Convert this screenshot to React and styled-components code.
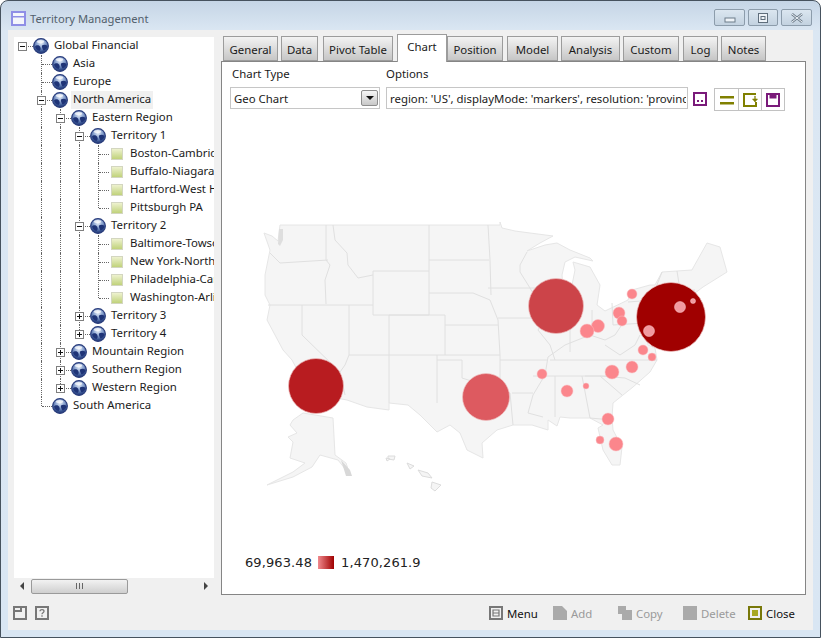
import React from 'react';
import styled, { createGlobalStyle } from 'styled-components';

const Global = createGlobalStyle`
  html, body { margin: 0; padding: 0; background: #fff; }
  #root { width: 821px; height: 638px; overflow: hidden; }
  * { box-sizing: border-box; }
`;

const Win = styled.div`
  width: 821px; height: 638px;
  display: flex; flex-direction: column;
  border: 1px solid #46525e;
  border-radius: 8px 8px 0 0;
  background: linear-gradient(180deg, #c5d5e6 0, #dbe7f3 30px, #d9e6f3 100%);
  padding: 0 7px 7px 7px;
  font-family: "Noto Sans", "Open Sans", sans-serif;
  font-size: 11.4px;
  color: #1a1a1a;
`;
const TitleBar = styled.div`
  height: 29px; flex: none;
  display: flex; align-items: center; gap: 4px;
  padding: 6px 0 0 3px;
`;
const TitleIcon = styled.svg`width: 15px; height: 15px; flex: none;`;
const TitleText = styled.div`
  color: #52606c; font-size: 11.2px; flex: 1; white-space: nowrap;
`;
const WinButtons = styled.div`display: flex; gap: 3px; margin-right: 1px; margin-top: -2px;`;
const WinBtn = styled.div`
  width: ${p => p.$w}px; height: 17px;
  border: 1px solid #8c9cab;
  border-radius: 2px;
  background: linear-gradient(180deg, #dbe6f0, #c3d2e0);
  display: flex; align-items: center; justify-content: center;
`;
const Body = styled.div`
  flex: 1; min-height: 0; background: #f0f0f0;
  display: flex; flex-direction: column;
`;
const Main = styled.div`
  height: 566px; flex: none;
  display: flex; padding: 5px 7px 0 6px;
  gap: 7px;
`;
const Left = styled.div`width: 200px; flex: none; display: flex; flex-direction: column; padding-top: 2px;`;
const TreeBox = styled.div`
  height: 541px; flex: none; background: #fff; overflow: hidden;
`;
const Row = styled.div`display: flex; align-items: center; height: 18px; white-space: nowrap;`;
const Cell = styled.div`
  position: relative; width: 19px; height: 18px; flex: none;
  &::before {
    content: ${p => (p.$kind === 'none' || p.$kind === 'root' ? 'none' : '""')};
    position: absolute; left: 8px; top: 0; width: 0;
    height: ${p => (p.$kind === 'elbow' ? '9px' : '18px')};
    border-left: 1px dotted #666;
  }
  &::after {
    content: ${p => (p.$kind === 'none' || p.$kind === 'line' ? 'none' : '""')};
    position: absolute; left: 9px; top: 9px; width: 10px; height: 0;
    border-top: 1px dotted #666;
  }
`;
const Expander = styled.div`
  position: absolute; left: 4px; top: 5px; width: 9px; height: 9px; z-index: 1;
  border: 1px solid #7f7f7f; background: #fff;
  &::before { content: ""; position: absolute; left: 1px; top: 3px; width: 5px; height: 1px; background: #111; }
  &::after {
    content: ${p => (p.$open ? 'none' : '""')};
    position: absolute; left: 3px; top: 1px; width: 1px; height: 5px; background: #111;
  }
`;
const GlobeSvg = styled.svg`width: 16px; height: 16px; flex: none;`;
const Leaf = styled.div`
  width: 12px; height: 12px; flex: none; margin-left: 2px; margin-right: 2px;
  border: 1px solid #d3d6c0;
  background: linear-gradient(180deg, #eef2cf, #c0d27a);
`;
const Label = styled.div`
  height: 18px; line-height: 16px; padding: 0 2px; margin-left: 3px;
  background: ${p => (p.$sel ? '#f0f0f0' : 'transparent')};
`;
const HScroll = styled.div`
  height: 16px; flex: none; display: flex; align-items: center;
  background: #f0f0f0; position: relative;
`;
const ScrollArrow = styled.div`
  width: 0; height: 0; flex: none; border-style: solid;
  border-width: 4px 0 4px 0;
  border-color: transparent #444;
  ${p => p.$dir === 'l' ? 'border-right-width: 4px; margin: 0 7px 0 6px;' : 'border-left-width: 4px; margin-left: 76px;'}
`;
const Thumb = styled.div`
  width: 97px; height: 15px; border: 1px solid #9a9a9a; border-radius: 2px;
  background: linear-gradient(180deg, #f2f2f2, #cfcfcf);
  display: flex; align-items: center; justify-content: center; gap: 1px;
  & > i { display: block; width: 1px; height: 6px; background: #666; margin: 0 0.5px; }
`;
const Right = styled.div`width: 585px; flex: none; display: flex; flex-direction: column;`;
const Tabs = styled.div`
  height: 26px; flex: none; display: flex; align-items: flex-end; padding-left: 2px; position: relative;
`;
const Tab = styled.div`
  width: ${p => p.$w}px;
  margin-right: ${p => p.$gap}px;
  height: ${p => (p.$active ? 28 : 25)}px;
  margin-bottom: ${p => (p.$active ? -1 : 0)}px;
  border: 1px solid #9c9c9c;
  border-bottom: ${p => (p.$active ? 'none' : '1px solid #9c9c9c')};
  background: ${p => (p.$active ? '#fff' : 'linear-gradient(180deg, #f3f3f3, #c6c6c6)')};
  display: flex; align-items: center; justify-content: center;
  padding: ${p => (p.$active ? '0 0 4px' : '1px 0 0')};
  position: relative; z-index: ${p => (p.$active ? 2 : 0)};
  white-space: nowrap;
`;
const Panel = styled.div`
  height: 534px; flex: none; background: #fff; border: 1px solid #858585;
  display: flex; flex-direction: column; position: relative;
`;
const Controls = styled.div`
  display: flex; align-items: flex-end; padding: 4px 0 0 8px; flex: none;
`;
const Field = styled.div`
  display: flex; flex-direction: column; margin-right: ${p => p.$mr}px;
`;
const FieldLabel = styled.div`height: 21px; line-height: 15px; padding-left: ${p => p.$pl}px;`;
const Select = styled.div`
  width: 150px; height: 22px; border: 1px solid #c6c6c6; background: #fff;
  display: flex; align-items: center; justify-content: space-between;
  padding: 0 1px 0 3px;
`;
const SelectArrow = styled.div`
  width: 17px; height: 16px; border: 1px solid #8d8d8d; border-radius: 2px;
  background: linear-gradient(180deg, #f6f6f6, #c8c8c8);
  display: flex; align-items: center; justify-content: center;
  &::after { content: ""; border-style: solid; border-width: 4px 4px 0 4px; border-color: #111 transparent transparent; }
`;
const OptionsInput = styled.input`
  width: 302px; height: 22px; border: 1px solid #c6c6c6; background: #fff;
  padding: 0 1px 0 3px; font: inherit; color: inherit; outline: none; display: block;
`;
const LoneIcon = styled.svg`width: 14px; height: 14px; margin: 0 7px 3px 5px; flex: none;`;
const BtnGroup = styled.div`display: flex; border: 1px solid #c2c2c2; height: 23px; margin-bottom: -2px;`;
const GroupBtn = styled.div`
  width: 23px; display: flex; align-items: center; justify-content: center;
  border-left: ${p => (p.$first ? 'none' : '1px solid #c2c2c2')};
`;
const Ico = styled.svg`width: ${p => p.$s || 16}px; height: ${p => p.$s || 16}px; display: block; flex: none;`;
const MapSvg = styled.svg`width: 583px; height: 300px; display: block; margin-top: 93px; flex: none;`;
const Legend = styled.div`
  display: flex; align-items: center; margin-top: 51px; padding-left: 23px;
  font-family: "DejaVu Sans", Verdana, sans-serif; font-size: 13px; color: #222; height: 18px; letter-spacing: 0.1px;
`;
const Swatch = styled.div`
  width: 16px; height: 13px; margin: 0 7px 0 6px;
  background: linear-gradient(90deg, #f08a8e, #a00000);
`;
const Footer = styled.div`
  flex: 1; display: flex; align-items: center;
  padding: 0 17px 0 5px;
`;
const FooterLeft = styled.div`display: flex; gap: 8px; margin-right: auto;`;
const FooterRight = styled.div`display: flex; align-items: center;`;
const Action = styled.div`
  display: flex; align-items: center; gap: 4px; width: ${p => p.$w}px;
  color: ${p => (p.$off ? '#9a9a9a' : '#111')};
`;

const Globe = () => (
  <GlobeSvg viewBox="0 0 16 16">
    <defs>
      <radialGradient id="gl" cx="0.5" cy="0.3" r="0.75">
        <stop offset="0" stopColor="#e8eff8" />
        <stop offset="0.4" stopColor="#8aa3d0" />
        <stop offset="0.75" stopColor="#34508f" />
        <stop offset="1" stopColor="#1e2f6a" />
      </radialGradient>
    </defs>
    <circle cx="8" cy="8" r="7.4" fill="url(#gl)" stroke="#2a3d7c" strokeWidth="1.1" />
    <path d="M2 8.5 C3.5 6.5 6 7 7 8.5 C7.5 10 8.5 11 6.5 13 C4.5 12.5 2.5 11 2 8.5Z" fill="#1f3477" />
    <path d="M9 7.5 C11 6.2 13 6.8 14.6 8 C14.2 10.5 12.5 12.2 10.5 12.6 C10 11 8.5 9.5 9 7.5Z" fill="#1f3477" />
    <ellipse cx="7.5" cy="3.6" rx="3.6" ry="1.7" fill="#fff" opacity="0.7" />
  </GlobeSvg>
);

const tree = {
  label: 'Global Financial', children: [
    { label: 'Asia' },
    { label: 'Europe' },
    { label: 'North America', sel: true, children: [
      { label: 'Eastern Region', children: [
        { label: 'Territory 1', children: [
          { label: 'Boston-Cambridge-Quincy', leaf: true },
          { label: 'Buffalo-Niagara Falls', leaf: true },
          { label: 'Hartford-West Hartford', leaf: true },
          { label: 'Pittsburgh PA', leaf: true },
        ] },
        { label: 'Territory 2', children: [
          { label: 'Baltimore-Towson', leaf: true },
          { label: 'New York-Northern', leaf: true },
          { label: 'Philadelphia-Camden', leaf: true },
          { label: 'Washington-Arlington', leaf: true },
        ] },
        { label: 'Territory 3', closed: true },
        { label: 'Territory 4', closed: true },
      ] },
      { label: 'Mountain Region', closed: true },
      { label: 'Southern Region', closed: true },
      { label: 'Western Region', closed: true },
    ] },
    { label: 'South America' },
  ],
};

function flatten(node, guides, isLast, out, isRoot) {
  out.push({ node, guides, isLast, isRoot });
  (node.children || []).forEach((c, i, arr) => {
    flatten(c, isRoot ? [false] : [...guides, !isLast], i === arr.length - 1, out, false);
  });
  return out;
}
const rows = flatten(tree, [], true, [], true);

const TreeRow = ({ r }) => {
  const { node, guides, isLast, isRoot } = r;
  const expandable = node.children || node.closed;
  return (
    <Row>
      {guides.map((g, i) => <Cell key={i} $kind={g ? 'line' : 'none'} />)}
      <Cell $kind={isRoot ? 'root' : isLast ? 'elbow' : 'tee'}>
        {expandable && <Expander $open={!!node.children} />}
      </Cell>
      {node.leaf ? <Leaf /> : <Globe />}
      <Label $sel={node.sel}>{node.label}</Label>
    </Row>
  );
};

const tabs = [
  ['General', 55, 3], ['Data', 37, 5], ['Pivot Table', 70, 4], ['Chart', 50, 0, true], ['Position', 56, 4],
  ['Model', 51, 3], ['Analysis', 59, 3], ['Custom', 56, 4], ['Log', 35, 3], ['Notes', 45, 0],
];

const LAND = 'M264,233 L272,236 L278,241 L280,225 L485,225 L500,225 L500,222 L502,228 L515,231 L530,233 L553,236 L540,243 L527,251 L545,245 L557,243 L570,250 L590,258 L593,261 L575,257 L565,262 L562,275 L563,290 L566,300 L572,285 L575,270 L573,262 L590,267 L600,285 L597,305 L605,311 L628,300 L632,290 L650,285 L655,285 L662,272 L692,270 L693,268 L707,243 L720,247 L727,272 L703,287 L695,293 L697,305 L680,325 L660,340 L645,332 L648,345 L655,348 L657,360 L650,372 L633,387 L613,403 L612,417 L613,430 L622,447 L620,465 L612,465 L603,450 L598,428 L603,425 L590,418 L570,418 L560,417 L557,426 L548,420 L548,430 L532,425 L513,425 L497,430 L482,443 L483,458 L467,450 L460,433 L450,425 L437,432 L420,415 L408,405 L389,403 L389,410 L367,407 L347,400 L320,395 L313,378 L300,375 L292,360 L283,350 L275,335 L267,320 L270,305 L265,295 L265,275 L270,250 Z';
const LINES = 'M270,253 L280,263 L328,260 M326,225 L326,260 L330,265 L325,280 L326,304 M268,305 L349,305 M333,225 L335,240 L347,253 L348,265 L358,278 L373,275 M373,271 L429,271 M373,271 L373,315 L429,315 M429,225 L429,315 M349,305 L373,305 M389,315 L389,403 M302,305 L302,335 L340,372 L345,395 M349,305 L349,355 L345,365 L340,372 M349,355 L500,355 M389,315 L445,315 L445,355 M445,325 L498,325 M437,355 L437,403 M437,360 L462,360 L462,378 L510,393 L513,425 M512,393 L533,393 M500,355 L500,393 M429,260 L489,260 M488,225 L490,260 L491,295 M429,293 L473,293 L490,300 L498,320 L500,355 M488,288 L530,288 M527,252 L520,265 L520,272 L530,288 L560,288 M498,318 L545,318 M530,288 L540,305 L545,318 L538,330 L550,345 L555,360 M548,357 L545,375 L533,395 L528,413 L543,417 M533,376 L610,376 M500,360 L548,360 M550,360 L657,360 M555,376 L555,417 M582,376 L590,418 L612,420 M585,376 L600,376 L622,395 M600,376 L625,378 L640,385 M570,310 L570,352 M592,310 L592,335 M548,357 L565,345 L590,335 L605,340 L615,335 L625,320 M605,345 L620,355 L635,345 L640,335 M612,303 L613,325 L660,322 M628,302 L655,300 M662,272 L655,290 L655,310 M677,271 L680,290 M655,293 L695,290';
const AK = 'M293,420 L303,413 L333,418 L335,455 L346,463 L350,475 L338,460 L320,455 L312,467 L293,477 L267,485 L293,472 L305,463 L290,458 L293,442 L288,437 L297,433 L290,425 Z';
const HI = ['M432,482 L441,485 L435,491 L431,488 Z', 'M418,470 L428,473 L432,478 L422,476 Z', 'M407,463 L414,466 L410,469 Z', 'M388,456 L395,456 L394,460 L388,459 Z', 'M386,458 L390,459 L387,461 Z'];

const pink = [[632,294,5],[619,313,6],[622,321,5],[598,326,6.5],[587,331,7],[643,350,5],[652,357,4],[632,367,6],[612,372,7],[542,374,5],[567,391,6],[586,386,3],[608,419,6],[600,440,4],[616,444,7]];
const big = [[316,386,27.5,'#b81c20'],[486,397,23.5,'#dd5a60'],[556,306,27.5,'#cc4449'],[671,317,34.5,'#a00000']];
const overlay = [[680,307,5.5],[693,301,2.5],[649,331,5.5]];

export default function App() {
  return (
    <>
      <Global />
      <Win>
        <TitleBar>
          <TitleIcon viewBox="0 0 15 15">
            <rect x="0" y="0" width="15" height="15" fill="#8f8fe6" />
            <rect x="2" y="2" width="11" height="11" fill="#f4f6fb" />
            <rect x="2" y="5" width="11" height="1.5" fill="#8f8fe6" />
          </TitleIcon>
          <TitleText>Territory Management</TitleText>
          <WinButtons>
            <WinBtn $w={31}>
              <Ico $s={12} viewBox="0 0 12 12"><rect x="1" y="6" width="10" height="4" fill="#eef3f8" stroke="#6d7c8a" /></Ico>
            </WinBtn>
            <WinBtn $w={30}>
              <Ico $s={12} viewBox="0 0 12 12"><rect x="1.5" y="1.5" width="9" height="9" fill="#eef3f8" stroke="#5f6e7c" /><rect x="4" y="4.5" width="4" height="3" fill="none" stroke="#5f6e7c" /></Ico>
            </WinBtn>
            <WinBtn $w={31}>
              <Ico $s={12} viewBox="0 0 12 12"><path d="M1 2 L11 10 M11 2 L1 10" stroke="#6d7c8a" strokeWidth="2.6" /><path d="M1 2 L11 10 M11 2 L1 10" stroke="#eef3f8" strokeWidth="1" /></Ico>
            </WinBtn>
          </WinButtons>
        </TitleBar>
        <Body>
          <Main>
            <Left>
              <TreeBox>
                {rows.map((r, i) => <TreeRow key={i} r={r} />)}
              </TreeBox>
              <HScroll>
                <ScrollArrow $dir="l" />
                <Thumb><i /><i /><i /></Thumb>
                <ScrollArrow $dir="r" />
              </HScroll>
            </Left>
            <Right>
              <Tabs>
                {tabs.map(([t, w, g, a]) => <Tab key={t} $w={w} $gap={g} $active={a}>{t}</Tab>)}
              </Tabs>
              <Panel>
                <Controls>
                  <Field $mr={6}>
                    <FieldLabel $pl={2}>Chart Type</FieldLabel>
                    <Select>Geo Chart<SelectArrow /></Select>
                  </Field>
                  <Field $mr={0}>
                    <FieldLabel $pl={0}>Options</FieldLabel>
                    <OptionsInput readOnly value="region: 'US', displayMode: 'markers', resolution: 'provinces'" />
                  </Field>
                  <LoneIcon viewBox="0 0 14 14">
                    <rect x="1" y="1" width="12" height="12" fill="none" stroke="#7a1a7a" strokeWidth="2" />
                    <rect x="4" y="8" width="2" height="2" fill="#7a1a7a" />
                    <rect x="8" y="8" width="2" height="2" fill="#7a1a7a" />
                  </LoneIcon>
                  <BtnGroup>
                    <GroupBtn $first>
                      <Ico viewBox="0 0 16 16"><rect x="1" y="4" width="14" height="2.5" fill="#808000" /><rect x="1" y="10" width="14" height="2.5" fill="#808000" /></Ico>
                    </GroupBtn>
                    <GroupBtn>
                      <Ico viewBox="0 0 16 16">
                        <path d="M14 2 H2 V14 H14 V10" fill="none" stroke="#808000" strokeWidth="2" />
                        <path d="M12.8 4 V7 H10.5 L13 10 L15.5 7 H13.2 V4 Z" fill="#808000" stroke="#808000" strokeWidth="0.6" />
                      </Ico>
                    </GroupBtn>
                    <GroupBtn>
                      <Ico viewBox="0 0 16 16">
                        <rect x="2" y="2" width="12" height="12" fill="none" stroke="#7a1a7a" strokeWidth="2" />
                        <rect x="4.5" y="2" width="7" height="4.5" fill="#7a1a7a" />
                      </Ico>
                    </GroupBtn>
                  </BtnGroup>
                </Controls>
                <MapSvg viewBox="222 202 583 300">
                  <path d={LAND} fill="#f5f5f5" stroke="#e6e6e6" strokeWidth="1" />
                  <path d={LINES} fill="none" stroke="#e0e0e0" strokeWidth="1" />
                  <path d="M279,229 L283,229 L283,240 L280,246 L278,244 Z" fill="#dedede" />
                  <path d={AK} fill="#f5f5f5" stroke="#e6e6e6" />
                  <path d="M341,460 L350,470 L352,476 L346,476 Z" fill="#d8d8d8" />
                  {HI.map((d, i) => <path key={i} d={d} fill="#f5f5f5" stroke="#dcdcdc" />)}
                  {pink.map(([x, y, r], i) => <circle key={i} cx={x} cy={y} r={r} fill="#fb868c" stroke="#f8bfc2" strokeWidth="0.5" />)}
                  {big.map(([x, y, r, c], i) => <circle key={i} cx={x} cy={y} r={r} fill={c} stroke="#eec0c0" strokeWidth="0.7" />)}
                  {overlay.map(([x, y, r], i) => <circle key={i} cx={x} cy={y} r={r} fill="#f29aa0" stroke="#f8c8ca" strokeWidth="0.5" />)}
                </MapSvg>
                <Legend>69,963.48<Swatch />1,470,261.9</Legend>
              </Panel>
            </Right>
          </Main>
          <Footer>
            <FooterLeft>
              <Ico $s={14} viewBox="0 0 14 14"><path d="M1 1 H13 V13 H1 Z M1 5 H8 V1" fill="none" stroke="#777" strokeWidth="2" /></Ico>
              <Ico $s={14} viewBox="0 0 14 14"><rect x="1" y="1" width="12" height="12" fill="none" stroke="#777" strokeWidth="2" /><path d="M5 5.2 C5 3 9 3 9 5.2 C9 6.8 7 6.6 7 8.2 M7 9.3 V10.7" fill="none" stroke="#777" strokeWidth="1.3" /></Ico>
            </FooterLeft>
            <FooterRight>
              <Action $w={64}>
                <Ico $s={14} viewBox="0 0 14 14"><rect x="1" y="1" width="12" height="12" fill="none" stroke="#777" strokeWidth="2" /><path d="M4 4 H10 V10 H4 Z M4 7 H10" fill="none" stroke="#777" strokeWidth="1.2" /></Ico>
                Menu
              </Action>
              <Action $off $w={65}>
                <Ico $s={14} viewBox="0 0 14 14"><path d="M0 0 H9 L14 5 V14 H0 Z" fill="#aaa" /></Ico>
                Add
              </Action>
              <Action $off $w={65}>
                <Ico $s={14} viewBox="0 0 14 14"><path d="M0 0 H8 V4 H14 V14 H4 V8 H0 Z" fill="#aaa" /></Ico>
                Copy
              </Action>
              <Action $off $w={65}>
                <Ico $s={14} viewBox="0 0 14 14"><rect width="14" height="14" fill="#aaa" /></Ico>
                Delete
              </Action>
              <Action $w={48}>
                <Ico $s={14} viewBox="0 0 14 14"><rect x="1" y="1" width="12" height="12" fill="none" stroke="#78780a" strokeWidth="2" /><rect x="4" y="4" width="6" height="6" fill="#a8a820" /></Ico>
                Close
              </Action>
            </FooterRight>
          </Footer>
        </Body>
      </Win>
    </>
  );
}
